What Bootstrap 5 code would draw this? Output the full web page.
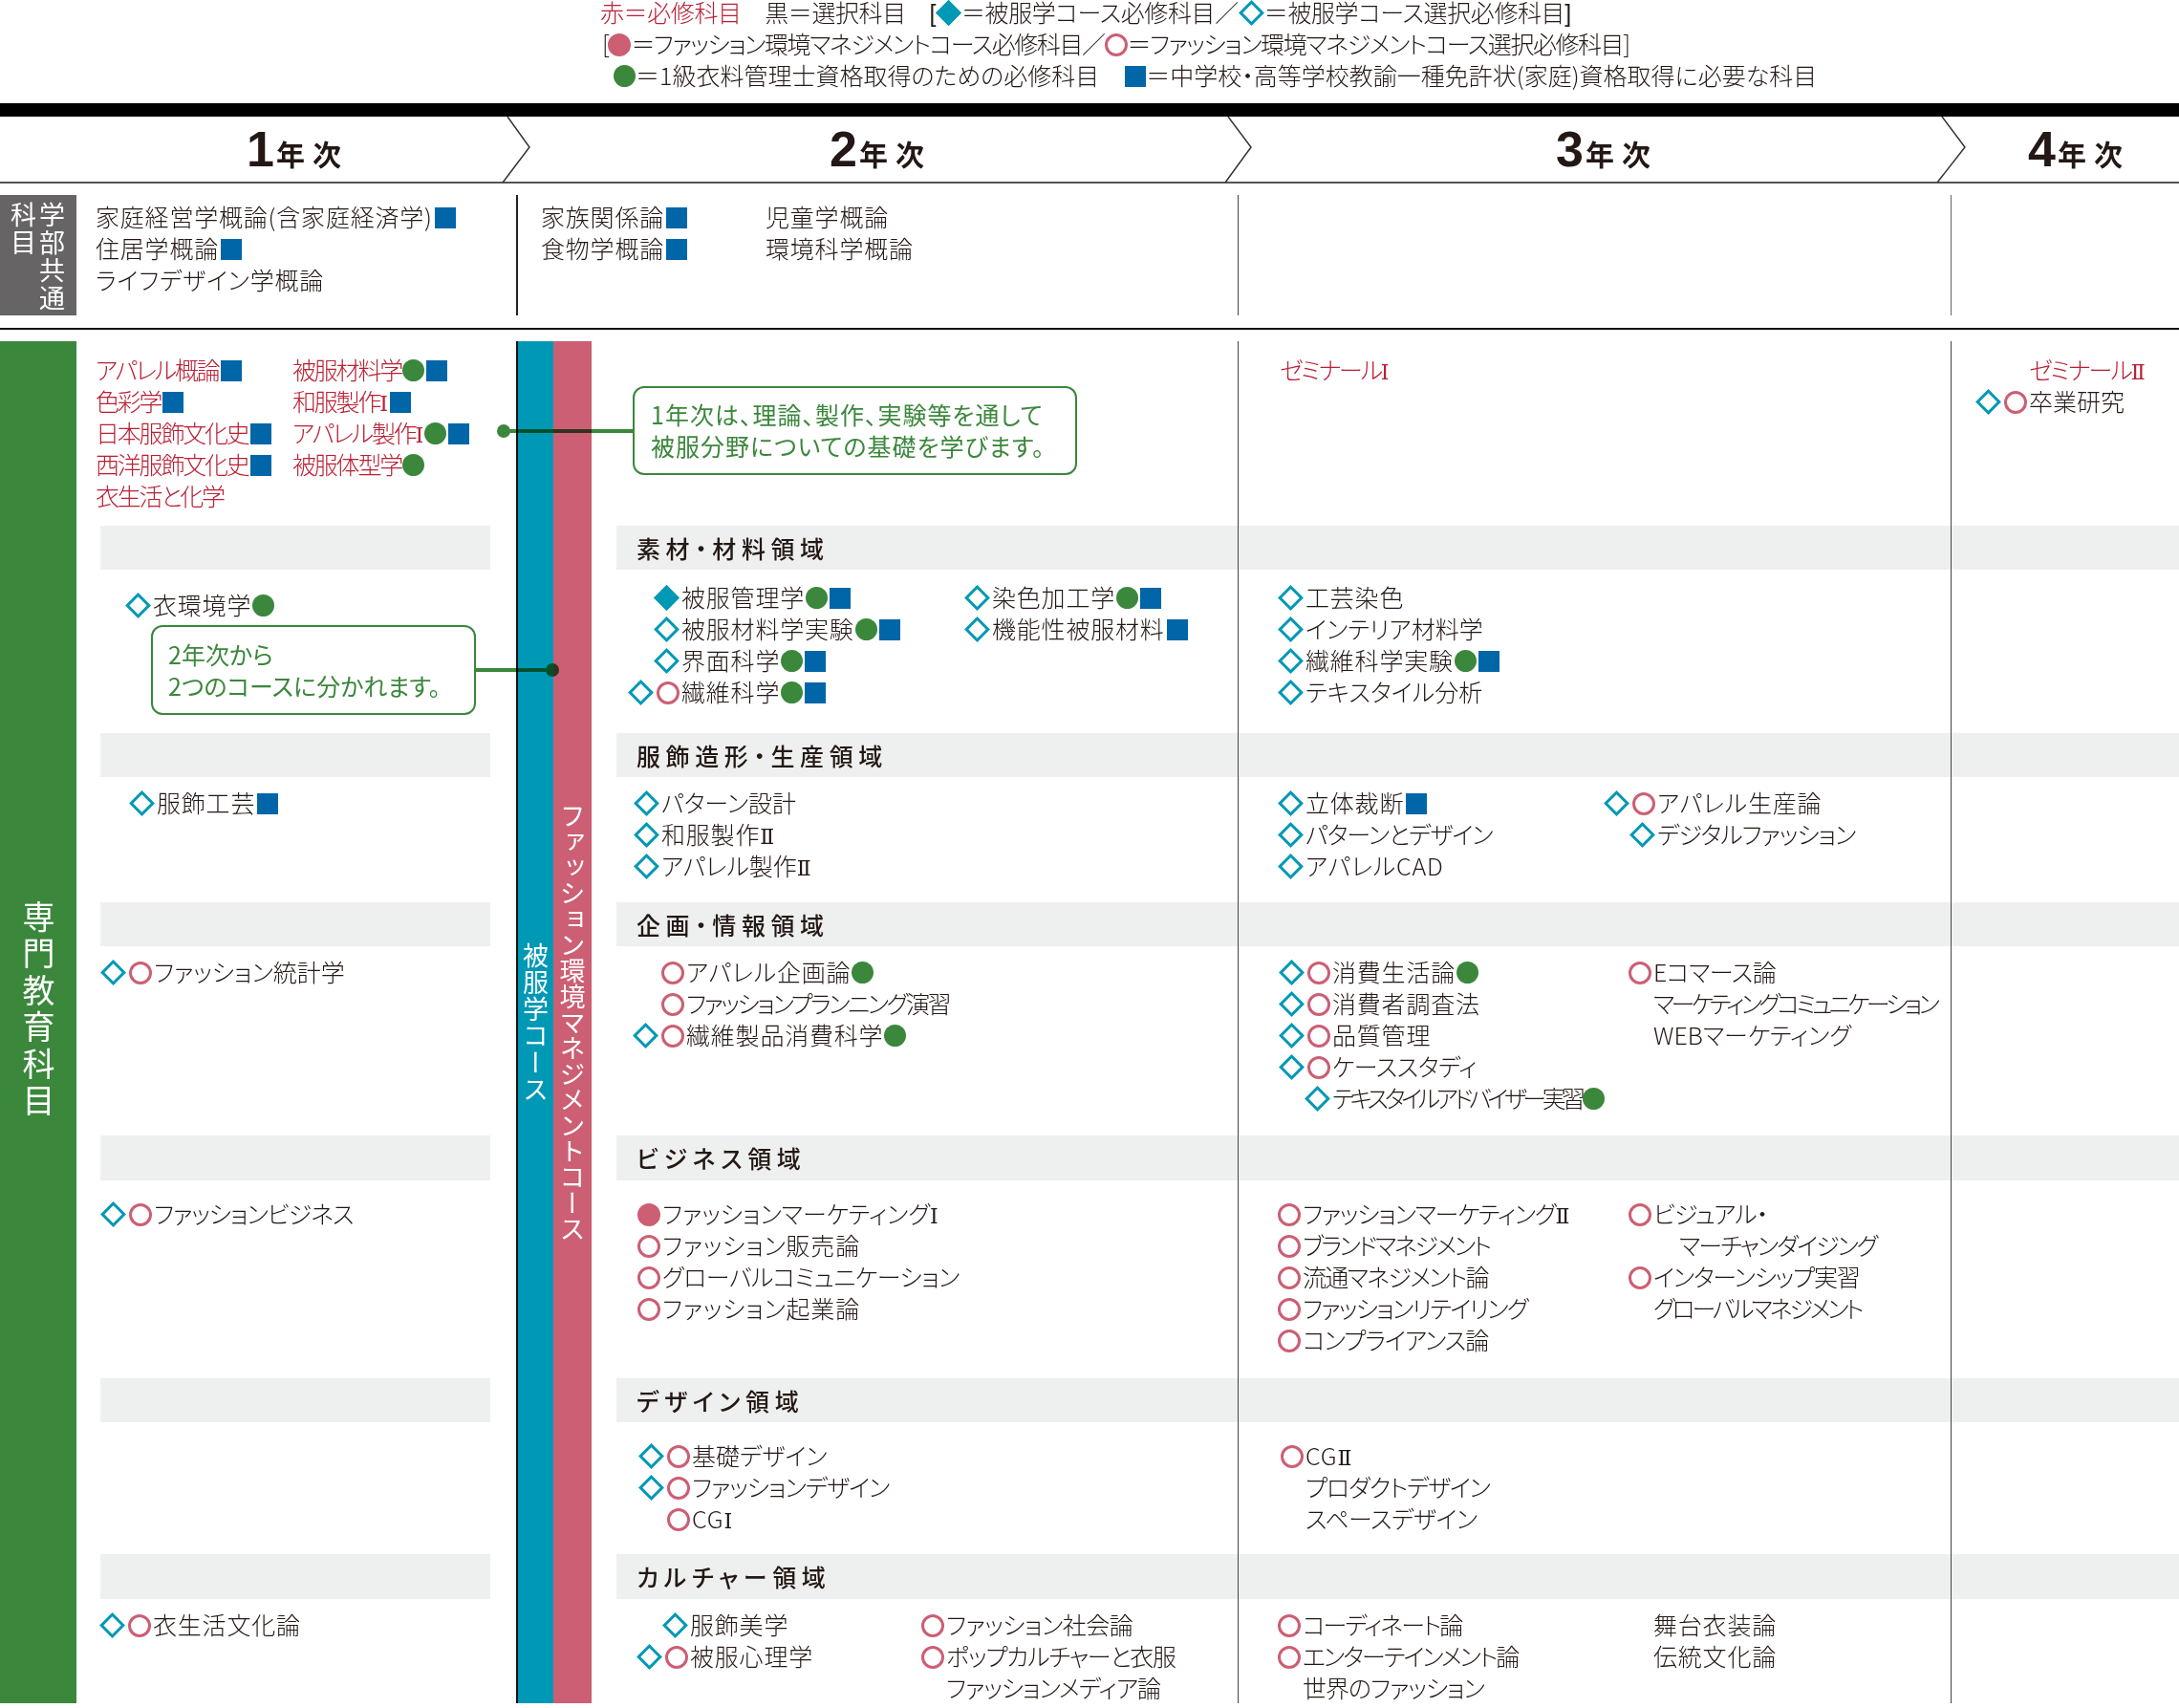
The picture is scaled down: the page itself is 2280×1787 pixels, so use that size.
<!doctype html>
<html lang="ja">
<head>
<meta charset="utf-8">
<title>カリキュラム</title>
<link href="https://cdn.jsdelivr.net/npm/bootstrap@5.3.0/dist/css/bootstrap.min.css" rel="stylesheet">
<style>
  body { margin: 0; background: #fff; color: #231815; font: 300 25px/33px "Noto Sans CJK JP", "Noto Sans", sans-serif; font-feature-settings: "palt"; letter-spacing: .8px; width: 2280px; height: 1787px; overflow: hidden; }
  .red { color: #b92034; }
  ul { list-style: none; margin: 0; padding: 0; white-space: nowrap; }
  li { height: 33px; }
  /* markers */
  i { display: inline-block; vertical-align: middle; margin-bottom: 5px; }
  .dia { width: 19px; height: 19px; margin: 0 4px 5px; border: 3px solid #0099b5; transform: rotate(45deg); }
  .dia.on { background: #0099b5; }
  .cir { width: 24px; height: 24px; border: 3px solid #cc5f73; border-radius: 50%; }
  .cir.on { background: #cc5f73; }
  .dot { width: 23px; height: 23px; background: #3b873c; border-radius: 50%; margin-left: 1px; }
  .sq { width: 22px; height: 22px; background: #0066a8; margin-left: 2px; }
  .mks { display: inline-flex; justify-content: flex-end; align-items: center; gap: 3px; width: 60px; height: 27px; margin: 0 0 5px -60px; padding-right: 2px; vertical-align: middle; }
  .mks i { margin-bottom: 0; flex: none; }
  .mks .dia { margin-bottom: 0; }
  /* tracking for kana-heavy names */
  .tk0 { letter-spacing: 0; } .tk05 { letter-spacing: -.5px; } .tk1 { letter-spacing: -1px; }
  .tk12 { letter-spacing: -1.2px; } .tk17 { letter-spacing: -1.7px; } .tk2 { letter-spacing: -2px; }
  .tk24 { letter-spacing: -2.4px; } .tk32 { letter-spacing: -3.2px; } .tk37 { letter-spacing: -3.7px; } .tk44 { letter-spacing: -4.4px; }
  .rn { font-family: "DejaVu Serif", serif; font-weight: 400; font-size: 22px; letter-spacing: 0; }
  /* legend */
  .legend { height: 108px; }
  .legend div { white-space: nowrap; height: 33px; }
  .lg1 { padding-left: 628px; height: 29px !important; line-height: 29px; letter-spacing: -.4px; font-family: "Liberation Sans", "Noto Sans CJK JP", sans-serif; }
  .lg2 { padding-left: 630px; letter-spacing: -1.45px; }
  .lg3 { padding-left: 641px; letter-spacing: 0; }
  .bar { height: 14px; background: #000; }
  /* year header */
  .years { height: 70px; border-bottom: 2px solid #555; }
  .yr { font-weight: 700; font-size: 30px; letter-spacing: 8px; line-height: 72px; font-feature-settings: normal; }
  .yr b { font: 700 52px/68px "Liberation Sans", sans-serif; letter-spacing: 2px; vertical-align: -1px; }
  .yr1 { width: 530px; padding-left: 258px; }
  .yr2 { width: 755px; padding-left: 338px; }
  .yr3 { width: 747px; padding-left: 343px; }
  .yr4 { width: 248px; padding-left: 90px; }
  .chev { fill: none; stroke: #333; stroke-width: 1.5; }
  /* common row */
  .common { height: 126px; margin: 12px 0 13px; }
  .c-head { width: 80px; height: 126px; background: #666465; color: #fff; writing-mode: vertical-rl; font-size: 27px; line-height: 30px; letter-spacing: 2px; padding: 7px 11px 0 0; font-weight: 400; }
  .c1 { width: 460px; padding: 6px 0 0 20px; }
  .c2 { width: 755px; padding: 6px 0 0 24px; border-left: 2px solid #222; }
  .c3 { width: 746px; border-left: 1px solid #444; }
  .c4 { width: 239px; border-left: 1px solid #666; }
  .w235 { width: 235px; }
  .rule { height: 2px; background: #111; margin-bottom: 12px; }
  /* curriculum grid */
  .cur { display: grid; grid-template-columns: 80px 460px 39px 40px 676px 746px 239px;
    grid-template-rows: 193px 46px 171px 46px 131px 46px 198px 47px 207px 46px 138px 47px 109px; }
  .strip { grid-row: 1 / -1; color: #fff; writing-mode: vertical-rl; display: flex; align-items: center; justify-content: center; font-weight: 400; font-size: 27px; line-height: 1; letter-spacing: 0; }
  .s-green { grid-column: 1; background: #3b873c; font-size: 34px; letter-spacing: 4.5px; padding-bottom: 24px; }
  .s-teal { grid-column: 3; background: #0099b5; box-shadow: inset 2px 0 0 #111; padding-left: 2px; letter-spacing: 1px; }
  .s-pink { grid-column: 4; background: #cc5f73; }
  .y3, .y4 { border-left: 1px solid #444; }
  .band { background: #eef0ef; }
  .bd1 { margin: 0 27px 0 25px; }
  .bd2 { margin-left: 26px; padding-left: 21px; line-height: 46px; font-weight: 500; letter-spacing: 5.6px; }
  .cell { display: flex; }
  .p13 { padding-top: 13px; }
  .p12 { padding-top: 12px; }
  .p20 { padding-top: 20px; }
  .p10 { padding-top: 10px; }
  .p18 { padding-top: 18px; }
  /* text offsets from cell edge */
  .l20 { padding-left: 20px; } .l43 { padding-left: 43px; } .l67 { padding-left: 67px; } .l70 { padding-left: 70px; }
  .l73 { padding-left: 73px; } .l74 { padding-left: 74px; } .l80 { padding-left: 80px; } .l81 { padding-left: 81px; }
  .l84 { padding-left: 84px; } .l94 { padding-left: 94px; } .l98 { padding-left: 98px; }
  .l99 { padding-left: 99px; } .l103 { padding-left: 103px; } .l105 { padding-left: 105px; }
  .w226 { width: 226px; } .w419 { width: 419px; } .w438 { width: 438px; } .w434 { width: 434px; } .w371 { width: 371px; }
  .sub { padding-left: 27px; }
  .reds li { letter-spacing: -2.2px; }
  /* callouts */
  .callout { border: 2.5px solid #3b873c; border-radius: 12px; color: #3b873c; white-space: nowrap; font-weight: 400; background: #fff; z-index: 2; }
  .call1 { left: 43px; top: 47px; width: 465px; height: 93px; padding: 11px 0 0 17px; letter-spacing: 1px; }
  .call2 { left: 78px; top: 58px; width: 340px; height: 94px; padding: 12px 0 0 16px; letter-spacing: 0; }
  .tie { height: 4px; background: #3b873c; mix-blend-mode: multiply; z-index: 3; }
  .tie::before { content: ""; position: absolute; top: -5px; width: 14px; height: 14px; border-radius: 50%; background: #3b873c; }
  .tie1 { left: 527px; top: 92px; width: 135px; }
  .tie1::before { left: -7px; }
  .tie2 { left: 498px; top: 342px; width: 80px; }
  .tie2::before { right: -7px; }
</style>
</head>
<body>
  <!-- 凡例 -->
  <div class="legend">
    <div class="lg1"><span class="red">赤＝必修科目</span>　黒＝選択科目　[<i class="dia on"></i>＝被服学コース必修科目／<i class="dia"></i>＝被服学コース選択必修科目]</div>
    <div class="lg2">[<i class="cir on"></i>＝ファッション環境マネジメントコース必修科目／<i class="cir"></i>＝ファッション環境マネジメントコース選択必修科目]</div>
    <div class="lg3"><i class="dot"></i>＝1級衣料管理士資格取得のための必修科目　<i class="sq"></i>＝中学校・高等学校教諭一種免許状(家庭)資格取得に必要な科目</div>
  </div>
  <div class="bar"></div>

  <!-- 年次 -->
  <div class="years d-flex position-relative">
    <div class="yr yr1"><b>1</b>年次</div>
    <div class="yr yr2"><b>2</b>年次</div>
    <div class="yr yr3"><b>3</b>年次</div>
    <div class="yr yr4"><b>4</b>年次</div>
    <svg class="position-absolute top-0 start-0" width="2280" height="70">
      <polyline class="chev" points="531,0 554,32 526,69"/>
      <polyline class="chev" points="1285,0 1309,32 1282,69"/>
      <polyline class="chev" points="2032,0 2056,32 2027,69"/>
    </svg>
  </div>

  <!-- 学部共通科目 -->
  <div class="common d-flex">
    <div class="c-head">学部共通<br>科目</div>
    <ul class="c1">
      <li>家庭経営学概論(含家庭経済学)<i class="sq"></i></li>
      <li>住居学概論<i class="sq"></i></li>
      <li>ライフデザイン学概論</li>
    </ul>
    <div class="c2 d-flex">
      <ul class="w235"><li>家族関係論<i class="sq"></i></li><li>食物学概論<i class="sq"></i></li></ul>
      <ul><li>児童学概論</li><li>環境科学概論</li></ul>
    </div>
    <div class="c3"></div>
    <div class="c4"></div>
  </div>
  <div class="rule"></div>

  <!-- 専門教育科目 -->
  <div class="cur position-relative">
    <div class="strip s-green">専門教育科目</div>
    <div class="strip s-teal">被服学コース</div>
    <div class="strip s-pink">ファッション環境マネジメントコース</div>
    <div class="tie tie1 position-absolute"></div>
    <div class="tie tie2 position-absolute"></div>

    <!-- 導入 -->
    <div class="cell p13 red reds">
      <ul class="l20 w226"><li>アパレル概論<i class="sq"></i></li><li>色彩学<i class="sq"></i></li><li>日本服飾文化史<i class="sq"></i></li><li>西洋服飾文化史<i class="sq"></i></li><li>衣生活と化学</li></ul>
      <ul><li>被服材料学<i class="dot"></i><i class="sq"></i></li><li>和服製作<span class="rn">Ⅰ</span><i class="sq"></i></li><li>アパレル製作<span class="rn">Ⅰ</span><i class="dot"></i><i class="sq"></i></li><li>被服体型学<i class="dot"></i></li></ul>
    </div>
    <div class="position-relative">
      <div class="callout call1 position-absolute">1年次は、理論、製作、実験等を通して<br>被服分野についての基礎を学びます。</div>
    </div>
    <div class="y3 cell p13 red reds"><ul class="l43"><li>ゼミナール<span class="rn">Ⅰ</span></li></ul></div>
    <div class="y4 cell p13"><ul class="l81"><li class="red tk2">ゼミナール<span class="rn">Ⅱ</span></li><li class="tk0"><span class="mks"><i class="dia"></i><i class="cir"></i></span>卒業研究</li></ul></div>

    <!-- 素材・材料領域 -->
    <div class="band bd1"></div>
    <div class="band bd2">素材・材料領域</div>
    <div class="band y3"></div>
    <div class="band y4"></div>

    <div class="cell p20 position-relative">
      <ul class="l80"><li><span class="mks"><i class="dia"></i></span>衣環境学<i class="dot"></i></li></ul>
      <div class="callout call2 position-absolute">2年次から<br>2つのコースに分かれます。</div>
    </div>
    <div class="cell p12">
      <ul class="l94 w419">
        <li><span class="mks"><i class="dia on"></i></span>被服管理学<i class="dot"></i><i class="sq"></i></li>
        <li><span class="mks"><i class="dia"></i></span>被服材料学実験<i class="dot"></i><i class="sq"></i></li>
        <li><span class="mks"><i class="dia"></i></span>界面科学<i class="dot"></i><i class="sq"></i></li>
        <li><span class="mks"><i class="dia"></i><i class="cir"></i></span>繊維科学<i class="dot"></i><i class="sq"></i></li>
      </ul>
      <ul>
        <li><span class="mks"><i class="dia"></i></span>染色加工学<i class="dot"></i><i class="sq"></i></li>
        <li><span class="mks"><i class="dia"></i></span>機能性被服材料<i class="sq"></i></li>
      </ul>
    </div>
    <div class="y3 cell p12">
      <ul class="l70">
        <li><span class="mks"><i class="dia"></i></span>工芸染色</li>
        <li class="tk0"><span class="mks"><i class="dia"></i></span>インテリア材料学</li>
        <li><span class="mks"><i class="dia"></i></span>繊維科学実験<i class="dot"></i><i class="sq"></i></li>
        <li class="tk0"><span class="mks"><i class="dia"></i></span>テキスタイル分析</li>
      </ul>
    </div>
    <div class="y4"></div>

    <!-- 服飾造形・生産領域 -->
    <div class="band bd1"></div>
    <div class="band bd2">服飾造形・生産領域</div>
    <div class="band y3"></div>
    <div class="band y4"></div>

    <div class="cell p10"><ul class="l84"><li><span class="mks"><i class="dia"></i></span>服飾工芸<i class="sq"></i></li></ul></div>
    <div class="cell p10">
      <ul class="l73">
        <li class="tk0"><span class="mks"><i class="dia"></i></span>パターン設計</li>
        <li><span class="mks"><i class="dia"></i></span>和服製作<span class="rn">Ⅱ</span></li>
        <li class="tk0"><span class="mks"><i class="dia"></i></span>アパレル製作<span class="rn">Ⅱ</span></li>
      </ul>
    </div>
    <div class="y3 cell p10">
      <ul class="l70 w438">
        <li><span class="mks"><i class="dia"></i></span>立体裁断<i class="sq"></i></li>
        <li class="tk1"><span class="mks"><i class="dia"></i></span>パターンとデザイン</li>
        <li><span class="mks"><i class="dia"></i></span>アパレルCAD</li>
      </ul>
      <ul>
        <li><span class="mks"><i class="dia"></i><i class="cir"></i></span>アパレル生産論</li>
        <li class="tk1"><span class="mks"><i class="dia"></i></span>デジタルファッション</li>
      </ul>
    </div>
    <div class="y4"></div>

    <!-- 企画・情報領域 -->
    <div class="band bd1"></div>
    <div class="band bd2">企画・情報領域</div>
    <div class="band y3"></div>
    <div class="band y4"></div>

    <div class="cell p10"><ul class="l81"><li class="tk0"><span class="mks"><i class="dia"></i><i class="cir"></i></span>ファッション統計学</li></ul></div>
    <div class="cell p10">
      <ul class="l99">
        <li><span class="mks"><i class="cir"></i></span>アパレル企画論<i class="dot"></i></li>
        <li class="tk24"><span class="mks"><i class="cir"></i></span>ファッションプランニング演習</li>
        <li><span class="mks"><i class="dia"></i><i class="cir"></i></span>繊維製品消費科学<i class="dot"></i></li>
      </ul>
    </div>
    <div class="y3 cell p10">
      <ul class="l98 w434">
        <li><span class="mks"><i class="dia"></i><i class="cir"></i></span>消費生活論<i class="dot"></i></li>
        <li><span class="mks"><i class="dia"></i><i class="cir"></i></span>消費者調査法</li>
        <li><span class="mks"><i class="dia"></i><i class="cir"></i></span>品質管理</li>
        <li class="tk05"><span class="mks"><i class="dia"></i><i class="cir"></i></span>ケーススタディ</li>
        <li class="tk44"><span class="mks"><i class="dia"></i></span>テキスタイルアドバイザー実習<i class="dot"></i></li>
      </ul>
      <ul>
        <li class="tk05"><span class="mks"><i class="cir"></i></span>Eコマース論</li>
        <li class="tk37">マーケティングコミュニケーション</li>
        <li class="tk0">WEBマーケティング</li>
      </ul>
    </div>
    <div class="y4"></div>

    <!-- ビジネス領域 -->
    <div class="band bd1"></div>
    <div class="band bd2">ビジネス領域</div>
    <div class="band y3"></div>
    <div class="band y4"></div>

    <div class="cell p18"><ul class="l81"><li class="tk1"><span class="mks"><i class="dia"></i><i class="cir"></i></span>ファッションビジネス</li></ul></div>
    <div class="cell p18">
      <ul class="l74">
        <li class="tk0"><span class="mks"><i class="cir on"></i></span>ファッションマーケティング<span class="rn">Ⅰ</span></li>
        <li><span class="mks"><i class="cir"></i></span>ファッション販売論</li>
        <li class="tk05"><span class="mks"><i class="cir"></i></span>グローバルコミュニケーション</li>
        <li><span class="mks"><i class="cir"></i></span>ファッション起業論</li>
      </ul>
    </div>
    <div class="y3 cell p18">
      <ul class="l67 w434">
        <li class="tk12"><span class="mks"><i class="cir"></i></span>ファッションマーケティング<span class="rn">Ⅱ</span></li>
        <li class="tk24"><span class="mks"><i class="cir"></i></span>ブランドマネジメント</li>
        <li class="tk17"><span class="mks"><i class="cir"></i></span>流通マネジメント論</li>
        <li class="tk17"><span class="mks"><i class="cir"></i></span>ファッションリテイリング</li>
        <li class="tk1"><span class="mks"><i class="cir"></i></span>コンプライアンス論</li>
      </ul>
      <ul>
        <li class="tk1"><span class="mks"><i class="cir"></i></span>ビジュアル・</li>
        <li class="sub tk2">マーチャンダイジング</li>
        <li class="tk12"><span class="mks"><i class="cir"></i></span>インターンシップ実習</li>
        <li class="tk32">グローバルマネジメント</li>
      </ul>
    </div>
    <div class="y4"></div>

    <!-- デザイン領域 -->
    <div class="band bd1"></div>
    <div class="band bd2">デザイン領域</div>
    <div class="band y3"></div>
    <div class="band y4"></div>

    <div></div>
    <div class="cell p18">
      <ul class="l105">
        <li class="tk0"><span class="mks"><i class="dia"></i><i class="cir"></i></span>基礎デザイン</li>
        <li class="tk1"><span class="mks"><i class="dia"></i><i class="cir"></i></span>ファッションデザイン</li>
        <li><span class="mks"><i class="cir"></i></span>CG<span class="rn">Ⅰ</span></li>
      </ul>
    </div>
    <div class="y3 cell p18">
      <ul class="l70">
        <li><span class="mks"><i class="cir"></i></span>CG<span class="rn">Ⅱ</span></li>
        <li class="tk12">プロダクトデザイン</li>
        <li class="tk05">スペースデザイン</li>
      </ul>
    </div>
    <div class="y4"></div>

    <!-- カルチャー領域 -->
    <div class="band bd1"></div>
    <div class="band bd2">カルチャー領域</div>
    <div class="band y3"></div>
    <div class="band y4"></div>

    <div class="cell p10"><ul class="l80"><li><span class="mks"><i class="dia"></i><i class="cir"></i></span>衣生活文化論</li></ul></div>
    <div class="cell p10">
      <ul class="l103 w371">
        <li><span class="mks"><i class="dia"></i></span>服飾美学</li>
        <li><span class="mks"><i class="dia"></i><i class="cir"></i></span>被服心理学</li>
      </ul>
      <ul>
        <li class="tk05"><span class="mks"><i class="cir"></i></span>ファッション社会論</li>
        <li class="tk12"><span class="mks"><i class="cir"></i></span>ポップカルチャーと衣服</li>
        <li class="tk1">ファッションメディア論</li>
      </ul>
    </div>
    <div class="y3 cell p10">
      <ul class="l67 w434">
        <li class="tk2"><span class="mks"><i class="cir"></i></span>コーディネート論</li>
        <li class="tk2"><span class="mks"><i class="cir"></i></span>エンターテインメント論</li>
        <li class="tk1">世界のファッション</li>
      </ul>
      <ul><li>舞台衣装論</li><li>伝統文化論</li></ul>
    </div>
    <div class="y4"></div>
  </div>

  <script src="https://cdn.jsdelivr.net/npm/bootstrap@5.3.0/dist/js/bootstrap.bundle.min.js"></script>
</body>
</html>
